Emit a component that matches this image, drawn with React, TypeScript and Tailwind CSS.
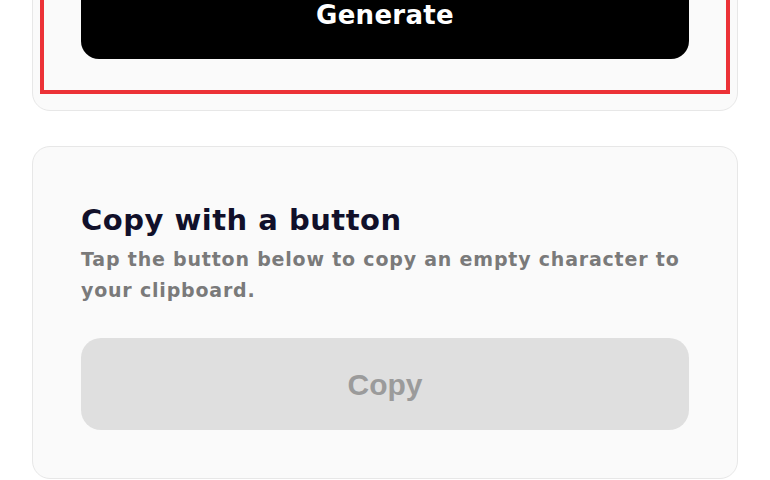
import React from 'react';

const display = "font-['DejaVu_Sans',sans-serif]";

export default function App() {
  return (
    <div className="min-h-screen bg-white overflow-hidden">
      <div className="px-[32px] -mt-[83px] flex flex-col gap-[35px]">
        {/* Generator card (only the bottom is in view) */}
        <section className="rounded-[18px] border border-[#e7e7e7] bg-[#fafafa] px-[7px] pt-[7px] pb-[16px]">
          <div className="border-4 border-[#ec3237] px-[37px] pt-[38px] pb-[31px]">
            <button
              type="button"
              className={`${display} w-full h-[92px] rounded-[18px] bg-black text-white text-[26px] font-bold tracking-[0.3px] flex items-center justify-center pt-[5px]`}
            >
              Generate
            </button>
          </div>
        </section>

        {/* Copy card */}
        <section className="rounded-[18px] border border-[#e7e7e7] bg-[#fafafa] px-[48px] pt-[56px] pb-[48px]">
          <h2 className={`${display} text-[29px] leading-[34px] font-bold tracking-[0.5px] text-[#11102a]`}>
            Copy with a button
          </h2>
          <p className={`${display} mt-[7px] text-[19px] leading-[31px] font-bold tracking-[0.8px] text-[#7a7a7a]`}>
            Tap the button below to copy an empty character to your clipboard.
          </p>
          <button
            type="button"
            className="mt-[32px] w-full h-[92px] rounded-[20px] bg-[#dfdfdf] text-[#9b9b9b] text-[30px] font-bold font-['Liberation_Sans',Arial,sans-serif] flex items-center justify-center"
          >
            Copy
          </button>
        </section>
      </div>
    </div>
  );
}
